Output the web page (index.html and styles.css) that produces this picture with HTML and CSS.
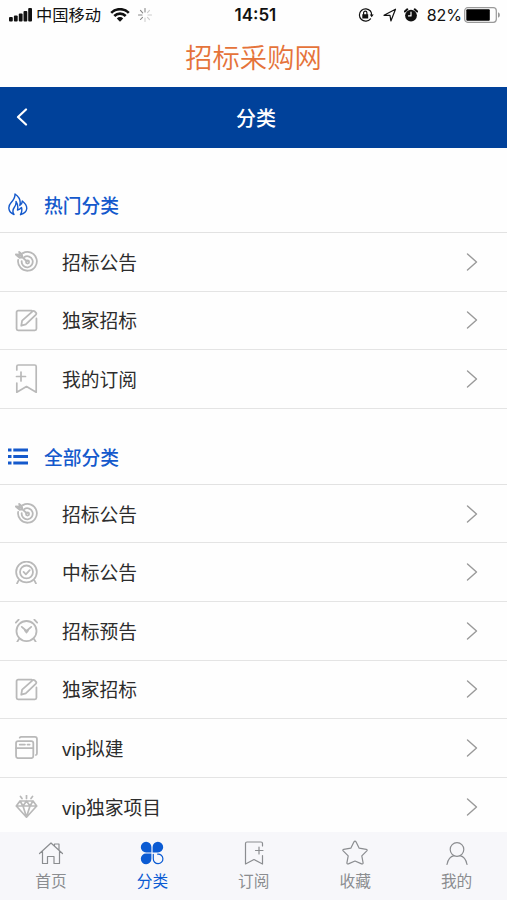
FILE: index.html
```html
<!DOCTYPE html>
<html lang="zh-CN">
<head>
<meta charset="utf-8">
<title>招标采购网</title>
<link rel="stylesheet" href="styles.css">
</head>
<body>
<svg class="defs" aria-hidden="true">
  <symbol id="target" viewBox="0 0 22 22"><path d="M7.500 3A9 9 0 1 1 3 9.500M9 6.700a5.300 5.300 0 1 1-2.600 4"/><circle cx="12" cy="11.500" r="1.500"/><path d="M.8 4.200l3.200.3M4 1.800l.7 3L11.500 11M1 4.500L4.500 7.500l2.500-.8-.5-3-2.500-1.700M2 4.800l4 1.200"/></symbol>
  <symbol id="edit" viewBox="0 0 22 22"><path d="M16 1.500H3a1.500 1.500 0 0 0-1.500 1.500v16A1.500 1.500 0 0 0 3 20.500h16a1.500 1.500 0 0 0 1.500-1.500V9M6 16l.8-4.800 10-9q1-.8 2.200.2l1 1q.9 1-.2 2.200l-9.500 9.200z"/></symbol>
  <symbol id="mark" viewBox="0 0 22 30"><path d="M1.300 6V2.500A1.500 1.500 0 0 1 2.800 1h16.400a1.500 1.500 0 0 1 1.500 1.500v25.700L11 22.500l-9.700 5.700V19M1 12.500h9M5.500 8v9"/></symbol>
  <symbol id="medal" viewBox="0 0 22 22"><circle cx="11" cy="10.500" r="9.900"/><circle cx="11" cy="10.500" r="6.200"/><path d="M8.200 10.500l2.200 2.200 3.700-4M3.500 18.500L2 21.500M18.500 18.500l1.500 3"/></symbol>
  <symbol id="clock" viewBox="0 0 22 22"><circle cx="11" cy="11.500" r="9.600"/><path d="M.8 3.500L3.500.6M21.200 3.500L18.500.6M4 19l-1.800 2.700M18 19l1.800 2.700M6.500 7.500l4.500 4 4.500-4M9.500 11h3L11 13z"/></symbol>
  <symbol id="windows" viewBox="0 0 22 22"><rect x="1" y="4.800" width="16.500" height="16.400" rx="2"/><path d="M1 11.500h16.500M4.500 8.200h5M12 8.200h2M4.500 1.600Q5 .9 6 .9h13a2 2 0 0 1 2 2v13.500q0 1.400-1 1.800"/></symbol>
  <symbol id="diamond" viewBox="0 0 22 23"><path d="M4.500 6h13l3.700 5L11 22.300.8 11zM.8 11h20.400M4.500 6L7.500 11l3.500 11 3.500-11 3-5M7.500 11l3.500-5 3.500 5M11 3.500V.5M6.500 3.500L5 1.500M15.500 3.500L17 1.500"/></symbol>
  <symbol id="arrow" viewBox="0 0 12 20"><path d="M1.500 2l9 8-9 8"/></symbol>
</svg>

<div class="status">
  <svg class="signal" viewBox="0 0 23 14"><rect x="0" y="9" width="3.800" height="4.500" rx="1"/><rect x="4.900" y="7.500" width="3.800" height="6" rx="1"/><rect x="9.800" y="5.500" width="3.800" height="8" rx="1"/><rect x="14.500" y="3" width="3.800" height="10.500" rx="1"/><rect x="19.200" y="0" width="3.800" height="13.500" rx="1"/></svg>
  <span class="carrier">中国移动</span>
  <svg class="wifi" viewBox="0 0 20 14"><path d="M1.200 4.800a12.500 12.500 0 0 1 17.600 0M4.300 8a8 8 0 0 1 11.400 0"/><path class="solid" d="M6.800 10.400a4.500 4.500 0 0 1 6.400 0L10 13.700z"/></svg>
  <svg class="spinner" viewBox="0 0 14 14"><path d="M7 .5V4M2.500 2.300l2.200 2.500M.5 7H4M2.500 11.500l2-2.200"/><path class="pale" d="M7 10v3.500M9.500 9.300l2 2.300M10 7h3.500M9.500 4.700l2-2.400"/></svg>
  <span class="time">14:51</span>
  <div class="status-right">
    <svg class="lock" viewBox="0 0 16 14"><path d="M12.500 3.200A6.200 6.200 0 1 0 12.500 10.800"/><path d="M12.500 3.200A6 6 0 0 1 13.600 7"/><path class="solid" d="M11.700 6.500h4l-2 2.800zM4.300 6.200h5.900v4.200H4.300z"/><path d="M5.600 6.500V4.800a1.650 1.650 0 0 1 3.300 0v1.700"/></svg>
    <svg class="locate" viewBox="0 0 14 14"><path d="M1 7.300L12.500 1.200 7.900 13 7 7.300z"/></svg>
    <svg class="alarm" viewBox="0 0 14 14"><circle cx="7" cy="7.600" r="5.900"/><path class="bells" d="M.8 3.500L3.300 1.300M13.200 3.500l-2.500-2.200"/><path class="hands" d="M7 4.200v3.700H4.500"/></svg>
    <span class="percent">82%</span>
    <svg class="battery" viewBox="0 0 36 16"><rect class="shell" x=".7" y=".7" width="31.600" height="14.600" rx="3"/><rect x="2.300" y="2.300" width="23.500" height="11.400" rx="1"/><path class="tip" d="M34 5.200a3 3 0 0 1 0 5.600z"/></svg>
  </div>
</div>

<div class="brand">招标采购网</div>

<header class="topbar">
  <svg class="back" viewBox="0 0 12 18"><path d="M10 1.500L2 9l8 7.500"/></svg>
  <h1>分类</h1>
</header>

<main>
  <section class="hot">
    <h2><svg class="flame" viewBox="0 0 20 23"><path d="M6 21.500C-.5 19 0 13 3 9.800 5.800 6.700 7.200 4.500 7 1c4.500 3 6 7 4.800 11.500 1.700-1 2.500-2.500 2.500-4.500C20.500 13 20.500 19 12.500 21.700M6 21.500C4 18.500 5 16 6.500 14 7.800 12.200 8.300 10.500 8 8.500c2 3 2.200 5.500 1.500 8.500 1.700-.3 3-1.200 4-2.500.7 2.700.3 5-1 7.200"/></svg>热门分类</h2>
    <ul>
      <li><svg><use href="#target"/></svg><span>招标公告</span><svg class="go"><use href="#arrow"/></svg></li>
      <li><svg><use href="#edit"/></svg><span>独家招标</span><svg class="go"><use href="#arrow"/></svg></li>
      <li><svg class="tall"><use href="#mark"/></svg><span>我的订阅</span><svg class="go"><use href="#arrow"/></svg></li>
    </ul>
  </section>
  <section class="all">
    <h2><svg class="list" viewBox="0 0 20 17"><path d="M0 2h3.500M5.300 2H20M0 8.500h3.500M5.300 8.500H20M0 15h3.500M5.300 15H20"/></svg>全部分类</h2>
    <ul>
      <li><svg><use href="#target"/></svg><span>招标公告</span><svg class="go"><use href="#arrow"/></svg></li>
      <li><svg><use href="#medal"/></svg><span>中标公告</span><svg class="go"><use href="#arrow"/></svg></li>
      <li><svg><use href="#clock"/></svg><span>招标预告</span><svg class="go"><use href="#arrow"/></svg></li>
      <li><svg><use href="#edit"/></svg><span>独家招标</span><svg class="go"><use href="#arrow"/></svg></li>
      <li><svg><use href="#windows"/></svg><span>vip拟建</span><svg class="go"><use href="#arrow"/></svg></li>
      <li><svg><use href="#diamond"/></svg><span>vip独家项目</span><svg class="go"><use href="#arrow"/></svg></li>
    </ul>
  </section>
</main>

<nav class="tabs">
  <a><svg viewBox="0 0 26 26"><path d="M1.500 13.500L13 3l11.500 10.500M4.500 11.500V23.500h5V16.500h6.500v7h5.500v-12M16.500 5.500V4h4.500v6"/></svg>首页</a>
  <a class="active"><svg viewBox="0 0 26 26"><path class="petal" d="M12.400 12.400H7.300a5.300 5.300 0 1 1 5.100-5.300zM13.600 12.400V7.100a5.300 5.300 0 1 1 5.100 5.300zM12.400 13.600v5.100a5.300 5.300 0 1 1-5.100-5.100z"/><path d="M14.300 14.300v4.400a4.800 4.800 0 1 0 4.400-4.600"/></svg>分类</a>
  <a><svg viewBox="0 0 26 26"><path d="M21.500 6V3.500a1.500 1.500 0 0 0-1.500-1.500H6a1.500 1.500 0 0 0-1.500 1.500v20.500l8.500-4.500 8.500 4.500V15.500M14.500 10.500h7.500M18 7v7"/></svg>订阅</a>
  <a><svg viewBox="0 0 26 26"><path d="M12 1.800q1-1.500 2 0l3.200 6.400 7.100 1.100q1.500.4.500 1.500l-5 5 1.300 7q0 1.500-1.500 1.100L13 21 6.400 23.900q-1.500.4-1.500-1.100l1.300-7-5-5q-1-1.100.5-1.500l7.100-1.100z"/></svg>收藏</a>
  <a><svg viewBox="0 0 26 26"><circle cx="13" cy="9.500" r="6.800"/><path d="M3 24.500c1-5 4-8.200 7-8.800M23 24.500c-1-5-4-8.200-7-8.800"/></svg>我的</a>
</nav>
</body>
</html>
```

FILE: styles.css
```css
* { box-sizing: border-box; margin: 0; padding: 0; }
body {
  width: 507px;
  height: 900px;
  overflow: hidden;
  display: flex;
  flex-direction: column;
  background: #fefefe;
  color: #2d2d2d;
  font-family: "Noto Sans CJK SC", sans-serif;
}
svg {
  flex: none;
  fill: none;
  stroke: currentColor;
  stroke-linecap: round;
  stroke-linejoin: round;
}
.defs { display: none; }

.status {
  flex: none;
  display: flex;
  align-items: center;
  height: 29px;
  padding: 0 9px;
  color: #111;
  font-size: 16.3px;
  line-height: 27px;
}
.status .solid { fill: currentColor; stroke: none; }
.signal { width: 23px; height: 14px; fill: currentColor; stroke: none; }
.carrier { width: 66px; margin-left: 4px; white-space: nowrap; }
.wifi { width: 20px; height: 14px; margin-left: 8px; stroke-width: 2.6; stroke-linecap: butt; }
.spinner { width: 14px; height: 14px; margin-left: 8px; stroke: #888; stroke-width: 1.1; }
.spinner .pale { stroke: #ccc; }
.time { margin-left: 82.5px; padding-top: 1px; font: 600 17px/29px Inter, sans-serif; }
.status-right { display: flex; align-items: center; margin-left: auto; }
.lock { width: 16px; height: 14px; stroke-width: 1.2; }
.locate { width: 14px; height: 14px; margin-left: 8.5px; stroke-width: 1.2; }
.alarm { width: 14px; height: 14px; margin-left: 7px; fill: currentColor; stroke: none; }
.bells { stroke: currentColor; stroke-width: 2; }
.hands { fill: none; stroke: #fff; stroke-width: 1.2; }
.percent { margin-left: 9px; padding-top: 1px; font: 400 16px/29px Inter, sans-serif; }
.battery { width: 36px; height: 16px; margin: 0 -1.5px 0 1.5px; fill: #000; stroke: none; }
.battery .shell { fill: none; stroke: #999; stroke-width: 1.2; }
.battery .tip { fill: #999; }

.brand {
  flex: none;
  height: 58px;
  color: #e5733a;
  font-size: 27.3px;
  font-weight: 350;
  line-height: 55px;
  text-align: center;
}
.topbar {
  flex: none;
  display: grid;
  grid-template-columns: 45px 1fr 40px;
  align-items: center;
  height: 60.5px;
  background: #00419a;
  color: #fff;
}
.topbar h1 { padding-top: 2px; font-size: 20px; font-weight: 500; line-height: 58px; text-align: center; }
.back { width: 12px; height: 18px; margin-left: 16px; stroke-width: 2.2; }

main { flex: 1; min-height: 0; overflow: hidden; }
h2 {
  display: flex;
  align-items: center;
  height: 56px;
  padding-left: 8px;
  border-bottom: 1.5px solid #e2e2e2;
  color: #1459cc;
  font-size: 18.75px;
  font-weight: 500;
}
.hot h2 { margin-top: 29.500px; }
.all h2 { margin-top: 20px; }
.flame { width: 20px; height: 23px; margin-right: 16px; stroke-width: 1.4; }
.list { width: 20px; height: 17px; margin-right: 16px; stroke-width: 3; stroke-linecap: butt; }
ul { list-style: none; }
li {
  display: flex;
  align-items: center;
  height: 58.600px;
  padding: 0 29px 0 15px;
  border-bottom: 1.5px solid #e4e4e4;
  font-family: "Liberation Sans", "Noto Sans CJK SC", sans-serif;
  font-size: 18.75px;
}
li svg { width: 23px; height: 23px; color: #b9b9b9; stroke-width: 1.7; }
li .tall { height: 30px; }
li span { flex: 1; margin-left: 24px; padding-top: 4px; line-height: 28px; }
li .go { width: 12px; height: 20px; color: #999; stroke-width: 1.4; }

.tabs {
  flex: none;
  display: grid;
  grid-template-columns: repeat(5, 1fr);
  height: 68px;
  background: #f7f7fa;
  color: #8b8d90;
}
.tabs a {
  display: flex;
  flex-direction: column;
  align-items: center;
  padding: 8px 0 0 .6px;
  font-size: 15.700px;
  line-height: 29px;
}
.tabs svg { width: 26px; height: 26px; stroke-width: 1.2; }
.tabs .active { color: #0b5bd3; }
.petal { fill: currentColor; stroke: none; }
```
